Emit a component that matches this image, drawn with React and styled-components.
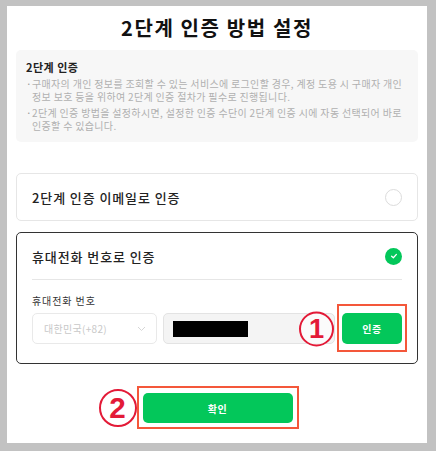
import React from 'react';
import styled, { createGlobalStyle } from 'styled-components';

const GlobalStyle = createGlobalStyle`
    html, body {
        margin: 0;
        padding: 0;
        background: #c2c2c2;
    }
    body {
        font-family: "Noto Sans CJK KR", "Noto Sans", sans-serif;
        color: #222;
    }
`

const Panel = styled.div`
    box-sizing: border-box;
    width: 420px;
    height: 437px;
    margin: 6px 0 0 7px;
    padding: 10px 9px 0;
    background: #fff;
`

const Title = styled.h1`
    margin: 0 0 10px;
    font-size: 20px;
    line-height: 24px;
    font-weight: 700;
    letter-spacing: 1.6px;
    text-align: center;
    color: #111;
`

const InfoBox = styled.div`
    box-sizing: border-box;
    height: 92px;
    padding: 10px 10px 0;
    background: #f7f7f7;
    border-radius: 5px;
`

const InfoTitle = styled.div`
    font-size: 11px;
    line-height: 14px;
    font-weight: 700;
    letter-spacing: 0.5px;
    color: #222;
    margin-bottom: 3px;
`

const Bullet = styled.div`
    display: flex;
    font-size: 10px;
    line-height: 13px;
    color: #b0b0b0;
    letter-spacing: 0.33px;
    word-break: keep-all;
    margin-top: ${props => props.first ? '0' : '3px'};
`

const Dot = styled.span`
    flex: 0 0 6px;
    color: #999;
`

const OptionCard = styled.div`
    box-sizing: border-box;
    margin-top: ${props => props.gap}px;
    border: 1px solid ${props => props.selected ? '#333' : '#e6e6e6'};
    border-radius: 5px;
    padding: ${props => props.selected ? '0 15px 19px' : '0 15px'};
`

const OptionHead = styled.div`
    display: flex;
    align-items: center;
    justify-content: space-between;
    height: ${props => props.h}px;
`

const OptionLabel = styled.span`
    font-size: 13px;
    font-weight: 500;
    letter-spacing: 0.9px;
    color: #222;
`

const Radio = styled.span`
    box-sizing: border-box;
    width: 17px;
    height: 17px;
    border-radius: 50%;
    border: 1px solid #dcdcdc;
    background: #fff;
`

const Checked = styled.span`
    display: flex;
    align-items: center;
    justify-content: center;
    width: 17px;
    height: 17px;
    border-radius: 50%;
    background: #03c75a;
`

const Divider = styled.div`
    height: 1px;
    background: #e6e6e6;
`

const FieldLabel = styled.div`
    margin-top: 14px;
    font-size: 10px;
    line-height: 14px;
    letter-spacing: 0.9px;
    color: #333;
`

const FieldRow = styled.div`
    display: flex;
    gap: 6px;
    margin-top: 5px;
    height: 31px;
`

const Select = styled.div`
    box-sizing: border-box;
    flex: 0 0 125px;
    display: flex;
    align-items: center;
    justify-content: space-between;
    padding: 0 10px 0 11px;
    border: 1px solid #e9e9e9;
    border-radius: 5px;
    font-size: 10px;
    letter-spacing: 0.3px;
    color: #c8c8c8;
`

const PhoneInput = styled.div`
    box-sizing: border-box;
    flex: 1;
    display: flex;
    align-items: center;
    padding-left: 9px;
    border: 1px solid #e3e3e3;
    border-radius: 5px;
    background: #f4f4f4;
`

const Redacted = styled.span`
    width: 75px;
    height: 16px;
    background: #000;
`

const Marked = styled.div`
    position: relative;
    margin-left: ${props => props.ml || 0}px;
`

const Highlight = styled.span`
    position: absolute;
    top: ${props => props.t}px;
    bottom: ${props => props.b}px;
    left: ${props => props.x}px;
    right: ${props => props.x}px;
    border: 2px solid #f4573a;
    pointer-events: none;
`

const Num = styled.span`
    position: absolute;
    top: 50%;
    right: calc(100% + ${props => props.off}px);
    transform: translateY(-50%);
    box-sizing: border-box;
    width: ${props => props.size}px;
    height: ${props => props.size}px;
    display: flex;
    align-items: center;
    justify-content: center;
    border: 2px solid #e31a37;
    border-radius: 50%;
    background: rgba(255, 255, 255, 0.6);
    font-family: "Liberation Sans", Arial, sans-serif;
    font-size: ${props => props.size * 0.78}px;
    font-weight: 700;
    color: #e31a37;
`

const GreenButton = styled.button`
    display: block;
    width: ${props => props.w}px;
    height: ${props => props.h}px;
    border: 0;
    border-radius: 5px;
    background: #03c75a;
    color: #fff;
    font-family: "Noto Sans CJK KR", sans-serif;
    font-size: 10px;
    font-weight: 700;
    letter-spacing: 0.5px;
    cursor: pointer;
`

const Footer = styled.div`
    display: flex;
    justify-content: center;
    margin-top: 29px;
    padding-left: 1px;
`

export default function App() {
    return (
        <>
            <GlobalStyle />
            <Panel>
                <Title>2단계 인증 방법 설정</Title>
                <InfoBox>
                    <InfoTitle>2단계 인증</InfoTitle>
                    <Bullet first>
                        <Dot>·</Dot>
                        <span>구매자의 개인 정보를 조회할 수 있는 서비스에 로그인할 경우, 계정 도용 시 구매자 개인 정보 보호 등을 위하여 2단계 인증 절차가 필수로 진행됩니다.</span>
                    </Bullet>
                    <Bullet>
                        <Dot>·</Dot>
                        <span>2단계 인증 방법을 설정하시면, 설정한 인증 수단이 2단계 인증 시에 자동 선택되어 바로 인증할 수 있습니다.</span>
                    </Bullet>
                </InfoBox>

                <OptionCard gap={31}>
                    <OptionHead h={46}>
                        <OptionLabel>2단계 인증 이메일로 인증</OptionLabel>
                        <Radio />
                    </OptionHead>
                </OptionCard>

                <OptionCard gap={11} selected>
                    <OptionHead h={46}>
                        <OptionLabel>휴대전화 번호로 인증</OptionLabel>
                        <Checked>
                            <svg width="8" height="8" viewBox="0 0 10 10">
                                <path d="M2 5.2 L4.2 7.2 L8 3" fill="none" stroke="#fff" strokeWidth="1.6" strokeLinecap="round" strokeLinejoin="round" />
                            </svg>
                        </Checked>
                    </OptionHead>
                    <Divider />
                    <FieldLabel>휴대전화 번호</FieldLabel>
                    <FieldRow>
                        <Select>
                            <span>대한민국(+82)</span>
                            <svg width="9" height="6" viewBox="0 0 9 6">
                                <path d="M1 1 L4.5 4.5 L8 1" fill="none" stroke="#d6d6d6" strokeWidth="1" />
                            </svg>
                        </Select>
                        <PhoneInput>
                            <Redacted />
                        </PhoneInput>
                        <Marked ml={1}>
                            <Highlight t={-9} b={-8} x={-5} />
                            <Num size={35} off={8}>1</Num>
                            <GreenButton w={60} h={31}>인증</GreenButton>
                        </Marked>
                    </FieldRow>
                </OptionCard>

                <Footer>
                    <Marked>
                        <Highlight t={-7} b={-6} x={-6} />
                        <Num size={38} off={6}>2</Num>
                        <GreenButton w={150} h={30}>확인</GreenButton>
                    </Marked>
                </Footer>
            </Panel>
        </>
    )
}
